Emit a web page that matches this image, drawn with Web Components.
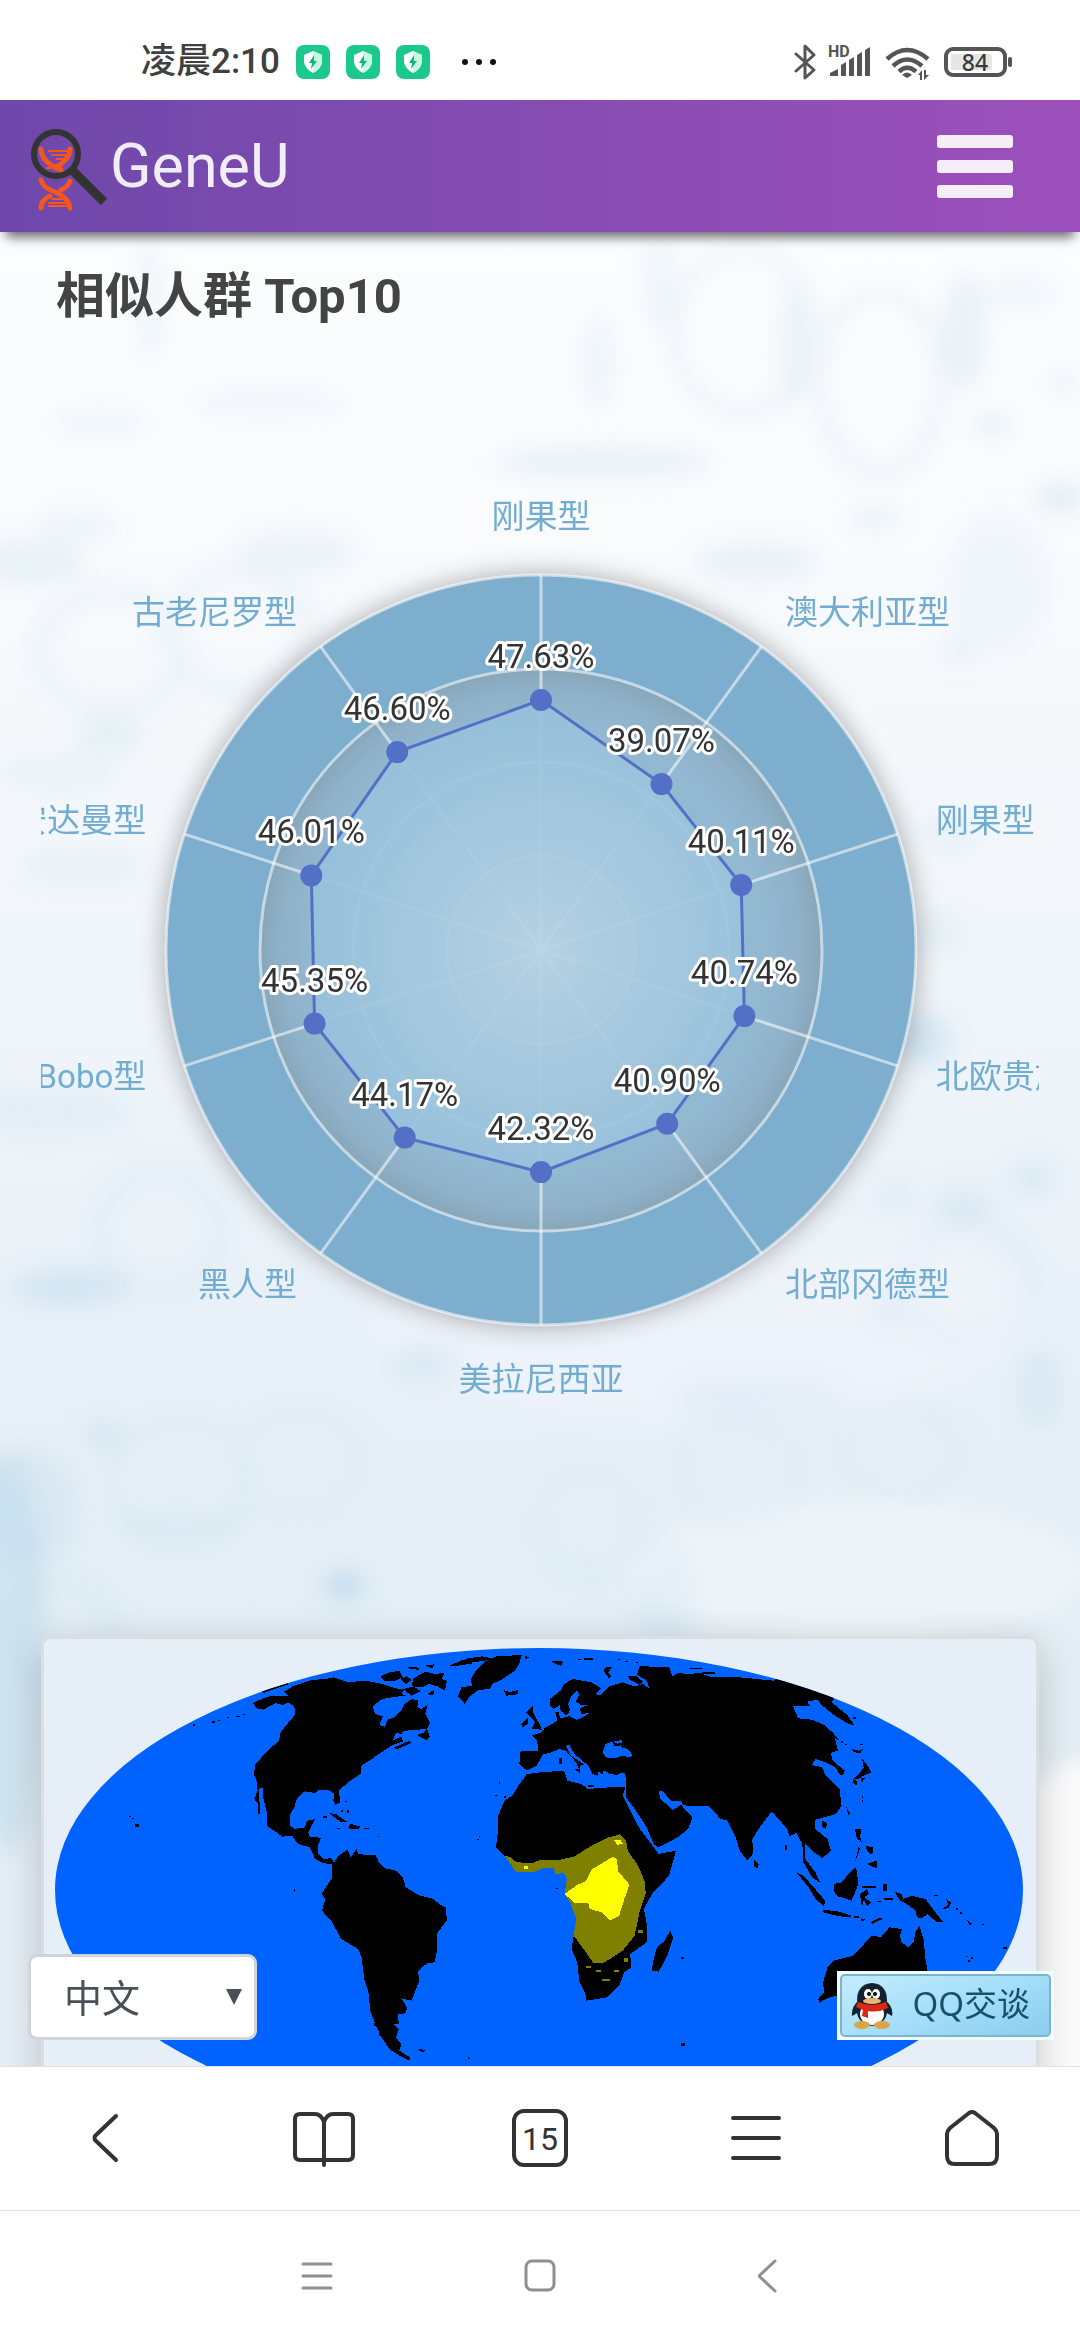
<!DOCTYPE html>
<html lang="zh-CN">
<head>
<meta charset="utf-8">
<meta name="viewport" content="width=device-width, initial-scale=1">
<title>GeneU</title>
<style>
  html, body { height: 100%; margin: 0; }
  body { font-family: Roboto, "Noto Sans CJK SC", sans-serif; background: #fff; color: #444; }
</style>
</head>
<body>
<gene-app></gene-app>

<script>
class BaseElement extends HTMLElement {
  connectedCallback() {
    if (!this.shadowRoot) this.attachShadow({ mode: 'open' }).innerHTML = this.render();
  }
}

/* ---------- Phone status bar ---------- */
class StatusBar extends BaseElement {
  render() {
    const shield = `<svg width="34" height="34" viewBox="0 0 34 34"><rect width="34" height="34" rx="8" fill="#1cc98c"/>
      <path d="M17 6 L26 10 V17 Q25 24 17 28 Q9 24 8 17 V10Z" fill="#fff"/><path d="M17 6 L26 10 V17 Q25 24 17 28Z" fill="#c5f9e2"/>
      <path d="M18 10 L13 18 H16 L15 24 L21 16 H18Z" fill="#12b57c"/></svg>`;
    return `<style>
      :host { display: block; background: #fff; color: #404040; }
      .bar { display: flex; justify-content: space-between; align-items: center; height: 100px; padding: 24px 68px 0 141px; box-sizing: border-box; }
      .side { display: flex; align-items: center; gap: 16px; }
      time { font-size: 35px; font-weight: 500; line-height: 40px; }
      svg { display: block; }
      .dots { margin-left: 14px; }
    </style>
    <div class="bar">
      <div class="side"><time>凌晨2:10</time>${shield.repeat(3)}
        <svg class="dots" width="36" height="8"><g fill="#111"><circle cx="5" cy="4" r="3"/><circle cx="19" cy="4" r="3"/><circle cx="33" cy="4" r="3"/></g></svg>
      </div>
      <svg width="218" height="36" viewBox="794 44 218 36">
        <g fill="none" stroke="#555">
          <path d="M796 54 L814 70 L805 78 V46 L814 55 L796 71" stroke-width="3" stroke-linejoin="round" stroke-linecap="round"/>
          <g stroke-width="4.5"><path d="M887 59 Q907 41 928 59"/><path d="M893 66 Q907 53 922 66"/><path d="M899 71.500 Q907 64 916 71.500"/></g>
          <rect x="946" y="49" width="59" height="26" rx="7" stroke-width="4"/>
        </g>
        <g fill="#555">
          <path d="M830 76 V73 L838 69 V76Z M841 76 V65 L846 62 V76Z M849 76 V60 L854 57 V76Z M857 76 V55 L862 52 V76Z M865 76 V50 L870 47 V76Z"/>
          <path d="M902 75 Q907 70 912 75 L907 78Z"/>
          <path d="M918 75 L922 70 V80 H920 V75Z M924 70 H926 V75 H929 L924 80Z"/>
          <rect x="1008" y="57" width="4" height="10" rx="2"/>
          <text x="828" y="57" font-size="16" font-weight="700" font-family="Roboto, sans-serif">HD</text>
        </g>
        <rect x="951" y="54" width="41" height="16" rx="2" fill="#e6e6e6"/>
        <text x="975" y="71" text-anchor="middle" font-size="23" font-weight="500" fill="#3a3a3a" font-family="'Noto Sans', sans-serif">84</text>
      </svg>
    </div>`;
  }
}

/* ---------- Site header ---------- */
class SiteHeader extends BaseElement {
  render() {
    return `<style>
      :host { display: block; position: relative; z-index: 1; }
      header { display: flex; align-items: center; justify-content: space-between; height: 132px; padding: 0 67px 0 28px; box-sizing: border-box;
        background: linear-gradient(90deg, #6e48aa, #9d50bb); box-shadow: 0 11px 11px -6px rgba(0,0,0,.6); }
      a { display: flex; align-items: center; gap: 2px; color: rgba(255,255,255,.9); text-decoration: none; font-size: 61px; line-height: 72px; }
      button { display: grid; gap: 12px; width: 76px; padding: 0; border: 0; background: none; }
      button i { height: 13px; border-radius: 3px; background: rgba(255,255,255,.9); }
      svg { display: block; }
    </style>
    <header>
      <a href="#"><svg width="80" height="92" viewBox="28 120 80 92" fill="none">
        <g stroke="#f4561c" stroke-linecap="round">
          <g stroke-width="5"><path d="M41 149 Q41 158 51 165 Q57 169 61 170"/><path d="M70 149 Q70 157 62 163 Q58 167 55 166"/>
          <path d="M41 180 Q42 187 55 192 Q69 198 70 208"/><path d="M70 181 Q68 187 61 190 M50 196 Q41 200 41 208"/></g>
          <g stroke-width="2"><path d="M49 151 H67 M52 155 H66 M57 159 H63 M47 168 H50 M49 203 H66 M52 199 H62 M49 206 H67"/></g>
        </g>
        <circle cx="56" cy="154" r="22" stroke="#333" stroke-width="6"/>
        <path d="M72 170 L104 202" stroke="#333" stroke-width="9"/>
      </svg><span>GeneU</span></a>
      <button aria-label="菜单"><i></i><i></i><i></i></button>
    </header>`;
  }
}

/* ---------- Radar chart of the ten closest populations ---------- */
class RadarChart extends BaseElement {
  render() {
    const cx = 541, cy = 950, R = 375, gap = 415, max = 47.63 * 1.5;
    const data = [['刚果型', 47.63], ['澳大利亚型', 39.07], ['刚果型', 40.11], ['北欧贵族', 40.74], ['北部冈德型', 40.90],
      ['美拉尼西亚', 42.32], ['黑人型', 44.17], ['Bobo型', 45.35], ['安达曼型', 46.01], ['古老尼罗型', 46.60]];
    const at = (i, r) => [Math.round((cx + r * Math.sin(i * Math.PI / 5)) * 10) / 10, Math.round((cy - r * Math.cos(i * Math.PI / 5)) * 10) / 10];
    const pts = data.map((d, i) => at(i, d[1] / max * R));
    const poly = pts.map(p => p.join()).join(' ');
    const spokes = data.map((d, i) => `M${cx} ${cy}L${at(i, R).join(' ')}`).join('');
    const names = data.map((d, i) => {
      const [x, y] = at(i, gap);
      const anchor = i % 5 === 0 ? 'middle' : i < 5 ? 'start' : 'end';
      const dy = i === 0 ? -7 : i === 5 ? 26 : 10;
      return `<text x="${x}" y="${y + dy}" text-anchor="${anchor}">${d[0]}</text>`;
    }).join('');
    const values = data.map((d, i) => `<text x="${pts[i][0]}" y="${pts[i][1] - 32}">${d[1].toFixed(2)}%</text>`).join('');
    return `<style>
      :host { display: block; }
      svg { display: block; width: 100%; overflow: hidden; font-size: 33px; }
      .names { fill: #72acd1; }
      .values { fill: #333; stroke: #fff; stroke-width: 6px; paint-order: stroke; stroke-linejoin: round; text-anchor: middle; }
    </style>
    <svg viewBox="41 350 998 1199" role="img" aria-label="相似人群雷达图">
      <defs>
        <filter id="soft" x="-20%" y="-20%" width="140%" height="140%"><feGaussianBlur stdDeviation="14"/></filter>
        <radialGradient id="ring" gradientUnits="userSpaceOnUse" cx="${cx}" cy="${cy}" r="281">
          <stop offset=".8" stop-color="#93b8d1"/><stop offset=".92" stop-color="#8fb2ca"/><stop offset="1" stop-color="#87a6b9"/></radialGradient>
        <radialGradient id="area" gradientUnits="userSpaceOnUse" cx="${cx}" cy="${cy}" r="250">
          <stop offset="0" stop-color="#b8d3e4"/><stop offset="1" stop-color="#94bfdb"/></radialGradient>
      </defs>
      <circle cx="${cx}" cy="${cy}" r="${R}" fill="#000" opacity=".34" filter="url(#soft)"/>
      <circle cx="${cx}" cy="${cy}" r="${R}" fill="#7eaece"/>
      <circle cx="${cx}" cy="${cy}" r="281" fill="url(#ring)"/>
      <g fill="none" stroke="#fff" stroke-opacity=".55" stroke-width="3">
        <circle cx="${cx}" cy="${cy}" r="94"/><circle cx="${cx}" cy="${cy}" r="188"/><circle cx="${cx}" cy="${cy}" r="281"/><circle cx="${cx}" cy="${cy}" r="${R}"/>
        <path d="${spokes}"/>
      </g>
      <polygon points="${poly}" fill="url(#area)" fill-opacity=".93"/>
      <polygon points="${poly}" fill="none" stroke="#5470c6" stroke-width="3"/>
      <g fill="#5470c6">${pts.map(p => `<circle cx="${p[0]}" cy="${p[1]}" r="11"/>`).join('')}</g>
      <g class="names">${names}</g>
      <g class="values">${values}</g>
    </svg>`;
  }
}

/* ---------- World distribution map ---------- */
class WorldMap extends BaseElement {
  render() {
    return `<style>
      :host { display: block; }
      svg { display: block; width: 100%; }
    </style>
    <svg viewBox="44 1640 992 504" shape-rendering="crispEdges" role="img" aria-label="刚果型分布图">
      <defs><clipPath id="globe"><ellipse cx="539" cy="1891" rx="484" ry="242"/></clipPath></defs>
      <g clip-path="url(#globe)">
      <rect x="44" y="1640" width="993" height="504" fill="#0062ff"/>
      <g transform="translate(0 1600) scale(.34436 .33333)">
        <path d="M760 275 L790 262 L835 250 L838 256 L790 272 L765 282Z
          M825 278 L850 262 L905 243 L945 240 L970 235 L1010 250 L1050 246 L1080 248 L1120 258 L1150 268 L1175 272 L1165 285 L1180 290 L1150 293 L1110 300 L1082 322 L1090 345 L1112 352 L1102 378 L1118 384 L1125 362 L1145 355 L1165 335 L1175 315 L1195 300 L1215 305 L1212 325 L1222 330 L1242 318 L1235 345 L1248 372 L1240 390 L1200 393 L1172 396 L1165 405 L1150 402 L1140 425 L1165 412 L1170 428 L1140 438 L1115 455 L1080 480 L1050 500 L1048 525 L1010 550 L985 575 L987 610 L975 618 L968 605 L970 585 L960 575 L925 572 L915 582 L885 577 L862 598 L855 625 L843 645 L843 680 L855 690 L885 685 L892 665 L915 660 L908 675 L895 700 L900 714 L932 716 L922 745 L925 765 L940 782 L960 776 L970 790 L985 768 L1010 752 L1018 775 L1035 750 L1040 765 L1065 768 L1090 767 L1100 790 L1118 808 L1150 815 L1170 835 L1178 865 L1215 888 L1260 900 L1275 915 L1296 925 L1297 965 L1268 1005 L1270 1050 L1262 1090 L1240 1093 L1215 1115 L1216 1150 L1195 1205 L1165 1198 L1182 1225 L1178 1243 L1155 1245 L1158 1275 L1143 1275 L1158 1290 L1150 1315 L1165 1335 L1160 1355 L1192 1376 L1188 1384 L1160 1370 L1130 1350 L1105 1310 L1088 1270 L1075 1235 L1070 1180 L1058 1140 L1050 1075 L1040 1050 L990 1020 L965 970 L935 935 L945 900 L933 885 L965 835 L965 795 L940 793 L915 780 L900 745 L865 735 L848 710 L820 713 L775 680 L775 640 L765 600 L765 565 L752 570 L755 645 L748 643 L750 615 L738 600 L748 575 L745 545 L737 525 L742 495 L780 452 L810 425 L815 400 L830 380 L858 345 L855 325 L840 310 L820 318 L800 312 L765 332 L745 328 L735 312 L760 300 L790 290 L840 292 Z
          M1105 232 L1130 220 L1160 216 L1170 235 L1150 245 L1115 246Z M1162 240 L1180 232 L1195 242 L1180 256Z M1185 204 L1220 206 L1215 212 L1188 210Z M1235 200 L1262 196 L1255 208Z
          M1200 238 L1235 218 L1262 225 L1290 222 L1282 240 L1298 245 L1292 275 L1270 262 L1245 255 L1225 265 L1195 262Z M1170 270 L1200 262 L1222 276 L1195 290Z M1240 285 L1262 272 L1258 290Z
          M1305 200 L1345 182 L1375 180 L1370 194 L1330 200Z M1345 180 L1400 172 L1440 180 L1375 190Z
          M1382 215 L1405 190 L1440 172 L1515 168 L1508 195 L1495 215 L1460 240 L1430 255 L1425 268 L1385 275 L1362 295 L1350 315 L1330 292 L1340 265 L1370 260 L1368 238Z
          M1462 272 L1480 280 L1505 272 L1503 286 L1470 290Z M1525 170 L1538 176 L1526 180Z
          M1215 405 L1230 402 L1240 388 L1248 412 L1240 424 L1215 412Z M1145 445 L1190 425 L1195 432 L1150 452Z
          M955 642 L975 645 L1008 668 L990 670Z M1018 675 L1048 683 L1040 690 L1008 688Z M978 687h10v4h-10z M1058 687h14v4h-14z M938 652h12v4h-12z M1003 606h6v4h-6z M990 634h6v4h-6z M1008 634h6v8h-6z M1098 710h4v5h-4z
          M392 674h12v9h-12z M376 651h4v4h-4z M384 656h5v4h-5z M853 870h5v9h-5z M1218 1350 L1234 1354 L1228 1360 L1218 1356Z M1358 1374 L1368 1380 L1358 1382Z
          M615 367h8v4h-8z M632 362h6v4h-6z M660 354h6v4h-6z M686 350h12v3h-12z M705 344h6v4h-6z M560 376h6v4h-6z M1448 550h4v4h-4z M1438 588h6v4h-6z M1464 592h5v4h-5z M1390 710h4v5h-4z M1386 719h4v4h-4z
          M1085 1272h6v10h-6z M1102 1296h6v16h-6z"/>
        <g transform="translate(1568 0)">
          <path d="M-38 525 L-63 560 L-80 590 L-103 605 L-123 655 L-122 700 L-128 745 L-103 770 L-68 820 L-20 820 L10 808 L40 808 L45 825 L70 822 L78 840 L72 885 L90 915 L105 960 L98 1010 L92 1050 L108 1090 L115 1150 L132 1185 L135 1205 L195 1195 L230 1160 L245 1120 L265 1105 L262 1065 L310 1030 L312 985 L302 930 L325 885 L375 830 L395 755 L345 765 L320 730 L290 690 L265 640 L240 590 L248 565 L200 565 L140 570 L120 555 L80 545 L70 515 L0 520 Z
            M-56 455 L-5 455 L-8 425 L-24 410 L5 400 L15 385 L35 375 L50 365 L45 340 L55 340 L58 358 L85 352 L105 362 L125 355 L145 342 L120 345 L115 328 L140 318 L120 318 L103 308 L115 285 L108 275 L92 290 L82 315 L88 335 L75 350 L60 335 L58 318 L40 330 L30 320 L28 300 L60 275 L70 255 L95 240 L150 250 L178 268 L160 285 L175 290 L200 262 L240 250 L275 262 L300 255 L318 270 L310 245 L282 228 L290 200 L340 205 L375 205 L385 232 L400 222 L430 225 L465 222 L500 235 L580 235 L680 245 L690 236 L800 260 L860 290 L848 310 L870 330 L890 345 L915 380 L890 372 L850 345 L820 320 L805 302 L775 308 L785 320 L735 322 L750 358 L790 362 L830 380 L855 410 L865 455 L845 462 L850 485 L885 515 L880 530 L868 525 L858 505 L830 490 L800 480 L790 498 L820 505 L830 530 L870 570 L876 620 L860 645 L825 655 L800 662 L800 690 L835 720 L845 755 L820 778 L790 755 L770 735 L770 780 L800 820 L814 852 L790 835 L765 790 L762 735 L745 702 L725 712 L718 690 L680 645 L672 638 L635 690 L617 720 L618 765 L602 785 L580 755 L570 720 L545 665 L525 660 L490 620 L440 622 L415 618 L410 605 L380 605 L355 575 L345 578 L350 600 L385 632 L410 618 L443 655 L430 690 L400 715 L345 745 L330 735 L310 685 L275 630 L250 595 L248 515 L215 525 L185 515 L180 528 L160 505 L150 480 L170 530 L152 525 L140 500 L100 465 L85 438 L75 440 L90 470 L130 497 L118 500 L115 515 L105 490 L75 455 L55 450 L30 462 L10 465 L-10 500 L-38 515 L-60 495 Z
            M-40 340 L-22 320 L-18 345 L0 378 L5 392 L-25 390 L-15 370 L-25 355Z M-55 375 L-35 355 L-36 375 L-50 385Z
            M30 185 L70 188 L60 200 L45 195Z M188 206 L210 204 L198 220 L208 232 L200 238 L186 218Z M110 180h8v4h-8z M128 178h26v4h-26z M226 180h6v4h-6z M248 185h8v4h-8z M278 188h8v4h-8z M436 206h34v5h-34z M470 218h38v6h-38z M256 230 L280 232 L300 248 L290 258 L262 244Z
            M56 478h8v16h-8z M100 510 L118 512 L115 522Z M140 558h18v5h-18z M214 558h14v5h-14z
            M935 478 L955 505 L962 520 L940 530 L925 540 L910 540 L930 520 L940 505Z M908 540 L920 545 L920 560 L910 552Z M930 535 L945 538 L935 550Z M905 450 L925 455 L938 450 L930 462 L912 460Z
            M830 385 L850 400 L870 425 L862 422Z M875 425h6v6h-6z M886 434h6v5h-6z M930 434h8v5h-8z M910 355h8v5h-8z
            M890 625 L902 645 L895 648Z M820 665 L835 672 L830 690 L818 682Z M620 780 L635 795 L632 808 L622 802Z M934 592h5v4h-5z M934 604h5v4h-5z
            M915 690 L932 690 L930 715 L935 730 L920 718Z M945 740 L968 745 L965 768 L950 755Z M948 795 L978 785 L978 808 L960 800Z M925 745 L930 748 L915 790Z
            M855 855 L875 850 L905 815 L918 805 L925 855 L905 905 L865 892 L855 880Z
            M745 820 L765 830 L795 865 L828 905 L825 922 L800 900 L780 865Z M822 932 L870 938 L905 950 L900 956 L850 948 L824 940Z M912 950h14v6h-14z M930 956 L945 962 L935 968Z M960 970 L990 955 L995 960 L965 975Z
            M935 860h42v6h-42z M930 885 L950 870 L955 885 L942 895 L962 910 L950 922 L940 902 L938 922 L932 910Z M995 855h12v20h-12z M1000 898h26v5h-26z M980 905h10v5h-10z
            M1030 878 L1050 885 L1055 900 L1080 890 L1120 900 L1145 935 L1170 968 L1150 968 L1125 945 L1110 958 L1095 955 L1090 935 L1065 915 L1045 905Z
            M1180 900 L1195 912 L1185 928 L1168 930 L1185 918Z M1145 888h12v4h-12z M1208 928h6v4h-6z M1220 940h6v5h-6z M1240 962 L1255 975 L1248 978Z M1284 974h5v5h-5z M1236 1070h5v5h-5z M1242 1082h7v6h-7z M1252 1074h5v5h-5z M1346 1044h10v5h-10z M712 738h4v14h-4z
            M808 1200 L825 1180 L822 1150 L835 1105 L852 1085 L910 1070 L950 1025 L965 1010 L990 1015 L1015 985 L1052 990 L1045 1010 L1050 1030 L1070 1045 L1085 1030 L1090 1000 L1102 980 L1115 1025 L1118 1070 L1125 1115 L1130 1250 L1000 1230 L860 1190 L830 1200 L812 1212Z
            M378 995 L387 1015 L370 1070 L345 1118 L325 1115 L330 1080 L340 1045 L362 1025Z M411 1075h8v6h-8z M411 1331h9v10h-9z M48 866h5v5h-5z"/>
          <path fill="#0062ff" d="M190 435 L212 428 L240 422 L235 445 L255 450 L269 468 L262 475 L240 470 L215 478 L192 475 L182 462Z"/>
          <path fill="#0062ff" d="M75 518 L100 528 L165 530 L175 525 L248 515 L248 563 L200 565 L140 568 L120 555 L80 545Z"/>
          <path d="M212 428 L225 434 L240 430 L232 442 L215 440Z M140 558h18v5h-18z M214 522h14v6h-14z M158 500 L172 506 L168 532 L160 525Z M185 512 L215 518 L248 512 L248 522 L205 526Z"/>
          <path fill="#808000" d="M-103 770 L-85 775 L-68 790 L-20 792 L0 783 L60 782 L100 772 L150 740 L200 715 L232 706 L250 725 L255 755 L285 800 L305 850 L307 885 L290 935 L275 1010 L240 1055 L185 1092 L155 1092 L130 1055 L98 1010 L105 960 L90 915 L72 885 L78 840 L70 822 L45 825 L40 808 L10 808 L-20 820 L-68 820Z
            M286 993h14v10h-14z M244 1076h12v12h-12z M133 1100h16v7h-16z M163 1112h14v7h-14z M214 1112h16v7h-16z M181 1139h22v8h-22z"/>
          <path fill="#ff0" d="M72 885 L105 860 L135 845 L150 812 L185 790 L212 773 L223 780 L228 818 L260 857 L245 900 L230 950 L203 965 L180 940 L145 930 L140 912 L100 912Z M216 724 L235 724 L240 734 L225 738Z M-45 800h10v9h-10z"/>
        </g>
      </g>
      </g>
    </svg>`;
  }
}

/* ---------- Card ---------- */
class MapCard extends BaseElement {
  render() {
    return `<style>
      :host { display: block; border: 3px solid #dcdfe1; border-radius: 11px; background: #e6eff7; box-shadow: 0 11px 44px rgba(0,0,0,.2); }
    </style><slot></slot>`;
  }
}

/* ---------- Language select ---------- */
class LangSelect extends BaseElement {
  render() {
    return `<style>
      :host { display: block; }
      label { display: grid; align-items: center; }
      select, svg { grid-area: 1 / 1; }
      select { appearance: none; width: 229px; height: 86px; padding: 4px 33px 0; border: 3px solid #ced4da; border-radius: 9px; background: #fff; color: #495057;
        font: 38px Roboto, "Noto Sans CJK SC", sans-serif; }
      svg { justify-self: end; margin-right: 15px; pointer-events: none; }
    </style>
    <label><select aria-label="语言"><option>中文</option><option>English</option></select>
      <svg width="16" height="16" viewBox="0 0 16 16"><path d="M0 0H16L8 16Z" fill="#495057"/></svg></label>`;
  }
}

/* ---------- QQ chat link ---------- */
class QqChat extends BaseElement {
  render() {
    return `<style>
      :host { display: block; padding: 3px; background: #effcff; }
      a { display: flex; align-items: center; gap: 19px; height: 63px; box-sizing: border-box; padding: 0 19px 0 9px; border: 2px solid #7db4cb; border-radius: 5px;
        background: linear-gradient(160deg, #c3ecfd, #a8e0fb 45%, #8acdee); color: #18506a; text-decoration: none; font: 33px/40px "Noto Sans", "Noto Sans CJK SC", sans-serif; }
      svg { display: block; flex: none; }
      span { padding-bottom: 4px; }
    </style>
    <a href="#"><svg width="42" height="46" viewBox="0 0 42 46">
      <path d="M8 17 Q0 24 1 33 L8 29Z M34 17 Q43 24 41 33 L34 29Z" fill="#12222f"/>
      <ellipse cx="21" cy="28" rx="15" ry="15" fill="#12222f"/>
      <ellipse cx="21" cy="31" rx="12" ry="11" fill="#fff"/>
      <ellipse cx="11" cy="42" rx="8" ry="4" fill="#dba545"/><ellipse cx="31" cy="42" rx="8" ry="4" fill="#dba545"/>
      <path d="M6 18 Q6 1 21 0 Q36 1 36 18 L33 23 H9Z" fill="#12222f"/>
      <path d="M7 19 Q21 25 35 19 L37 25 Q27 30 17 28 V35 L11 33 L12 27 L5 24Z" fill="#dc2718"/>
      <ellipse cx="17" cy="11" rx="4" ry="5" fill="#fff"/><ellipse cx="25" cy="11" rx="4" ry="5" fill="#fff"/>
      <circle cx="18" cy="11" r="2"/><circle cx="24" cy="11" r="2"/>
      <ellipse cx="21" cy="18" rx="9" ry="3" fill="#e9b66a"/>
    </svg><span>QQ交谈</span></a>`;
  }
}

/* ---------- Browser toolbar and system navigation ---------- */
class BrowserBar extends BaseElement {
  render() {
    return `<style>
      :host { display: block; background: #fff; border-top: 1px solid #e2e2e2; }
      nav { display: grid; grid-template-columns: repeat(5, 1fr); height: 144px; border-bottom: 1px solid #e2e2e2; box-sizing: border-box; }
      button { display: grid; place-items: center; padding: 0; border: 0; background: none; color: #333; font: 32px Roboto, sans-serif; }
      svg, b { grid-area: 1 / 1; } b { font-weight: 400; }
      svg { display: block; fill: none; stroke: #333; stroke-width: 4; stroke-linecap: round; stroke-linejoin: round; }
    </style>
    <nav>
      <button aria-label="后退"><svg width="64" height="64"><path d="M40 9 L19 29 Q18 31 19 33 L40 53"/></svg></button>
      <button aria-label="书签"><svg width="64" height="64"><path d="M32 58 V15 Q29 7 23 7 H8 Q3 7 3 12 V48 Q3 53 8 53 H56 Q61 53 61 48 V12 Q61 7 56 7 H41 Q35 7 32 15"/></svg></button>
      <button aria-label="标签页"><svg width="64" height="64"><rect x="6" y="4" width="52" height="54" rx="10"/></svg><b>15</b></button>
      <button aria-label="菜单"><svg width="64" height="64"><path d="M9 11 H55 M9 31 H55 M9 51 H55"/></svg></button>
      <button aria-label="主页"><svg width="64" height="64"><path d="M29 6 Q32 4 35 6 L54 21 Q57 24 57 27 V49 Q57 57 49 57 H15 Q7 57 7 49 V27 Q7 24 10 21Z"/></svg></button>
    </nav>`;
  }
}
class SystemNav extends BaseElement {
  render() {
    return `<style>
      :host { display: block; background: #fff; }
      nav { display: flex; justify-content: center; height: 129px; }
      button { display: grid; place-items: center; width: 225px; padding: 0; border: 0; background: none; }
      svg { display: block; fill: none; stroke: #8f8f8f; stroke-width: 3; stroke-linecap: round; stroke-linejoin: round; }
    </style>
    <nav>
      <button aria-label="最近任务"><svg width="40" height="40"><path d="M8 8 H36 M8 20 H36 M8 32 H36"/></svg></button>
      <button aria-label="主屏幕"><svg width="40" height="40"><rect x="6" y="5" width="28" height="29" rx="6"/></svg></button>
      <button aria-label="返回"><svg width="40" height="40"><path d="M30 5 L15 19 Q14 20 15 21 L30 35"/></svg></button>
    </nav>`;
  }
}

/* ---------- Soft molecular backdrop ---------- */
class PageBackdrop extends BaseElement {
  render() {
    const spots = [[603,230,110,16,.5],[270,170,80,14,.3],[100,190,50,14,.3],[27,330,60,22,.5],[76,294,40,12,.4],[296,321,60,20,.4],[110,505,34,16,.6],
      [83,634,60,14,.4],[60,540,60,18,.3],[757,330,60,18,.5],[875,285,22,10,.6],[1060,266,24,14,.8],[992,193,20,12,.6],[1062,150,18,10,.5],[998,350,50,70,.25],
      [923,808,28,26,1],[41,880,90,22,.4],[69,1056,60,20,.8],[103,1203,22,16,.6],[344,1354,20,13,1.6],[30,1276,50,60,.5],[1033,946,24,18,.6],[964,973,30,18,.6],
      [896,965,16,14,.5],[1040,1157,22,40,.6],[757,1166,90,24,.35],[668,1368,30,60,.35],[427,1130,35,20,.6],[599,128,18,50,.35],[792,110,16,60,.4],[964,100,24,60,.5],
      [1020,60,40,20,.3],[660,50,18,50,.35],[150,70,16,60,.35],[890,1080,18,14,.5],[950,600,30,16,.4],[940,700,24,18,.4],[960,420,14,14,.5],[180,1290,60,14,.3],[8,1420,40,200,.9]];
    const cells = [[744,100,70,80],[880,150,60,90],[160,1000,60,60],[180,1250,70,60],[300,1230,60,50],[60,1400,50,50],[590,1290,50,50],[740,1240,60,50],[970,1050,60,60],[900,1220,60,40],[240,400,70,60],[110,420,70,60]];
    return `<style>
      :host { display: block; background: linear-gradient(180deg, #fcfdfe 0, #f9fbfd 15%, #f1f6fa 38%, #e9f1f8 58%, #e3eef5 76%, #e6eff6 100%); }
      svg { display: block; width: 100%; height: 100%; }
    </style>
    <svg viewBox="0 0 1080 1834" preserveAspectRatio="xMidYMin slice" aria-hidden="true">
      <defs><filter id="b" x="-50%" y="-50%" width="200%" height="200%"><feGaussianBlur stdDeviation="11"/></filter></defs>
      <g filter="url(#b)">
        <ellipse cx="700" cy="1080" rx="330" ry="110" fill="#f0f4fb" opacity=".7"/>
        <ellipse cx="860" cy="1340" rx="230" ry="70" fill="#f2f6fb" opacity=".7"/>
        <ellipse cx="1080" cy="1780" rx="110" ry="250" fill="#fcfcfd"/>
        <g fill="none" stroke="#c8deed" stroke-width="16" opacity=".22">${cells.map(c => `<ellipse cx="${c[0]}" cy="${c[1]}" rx="${c[2]}" ry="${c[3]}"/>`).join('')}</g>
        ${spots.map(s => `<ellipse cx="${s[0]}" cy="${s[1]}" rx="${s[2]}" ry="${s[3]}" fill="#b4d5ea" opacity="${Math.round(s[4] * 45) / 100}"/>`).join('')}
      </g>
    </svg>`;
  }
}

/* ---------- Page shell ---------- */
class GeneApp extends BaseElement {
  render() {
    return `<style>
      :host { display: flex; flex-direction: column; height: 100vh; }
      status-bar, site-header, browser-bar, system-nav { flex: none; }
      .view { position: relative; flex: 1; min-height: 0; overflow: hidden; }
      page-backdrop { position: absolute; inset: 0; }
      main { position: relative; padding: 0 41px; }
      h1 { margin: 0; padding: 35px 15px 23px; font-size: 49px; line-height: 60px; font-weight: 700; color: #444; }
      map-card { margin-top: 87px; }
      lang-select, qq-chat { position: absolute; bottom: 26px; }
      lang-select { left: 28px; }
      qq-chat { right: 26px; }
    </style>
    <status-bar></status-bar>
    <site-header></site-header>
    <div class="view">
      <page-backdrop></page-backdrop>
      <main>
        <h1>相似人群 Top10</h1>
        <radar-chart></radar-chart>
        <map-card><world-map></world-map></map-card>
      </main>
      <lang-select></lang-select>
      <qq-chat></qq-chat>
    </div>
    <browser-bar></browser-bar>
    <system-nav></system-nav>`;
  }
}

customElements.define('status-bar', StatusBar);
customElements.define('site-header', SiteHeader);
customElements.define('radar-chart', RadarChart);
customElements.define('world-map', WorldMap);
customElements.define('map-card', MapCard);
customElements.define('lang-select', LangSelect);
customElements.define('qq-chat', QqChat);
customElements.define('browser-bar', BrowserBar);
customElements.define('system-nav', SystemNav);
customElements.define('page-backdrop', PageBackdrop);
customElements.define('gene-app', GeneApp);
</script>
</body>
</html>
